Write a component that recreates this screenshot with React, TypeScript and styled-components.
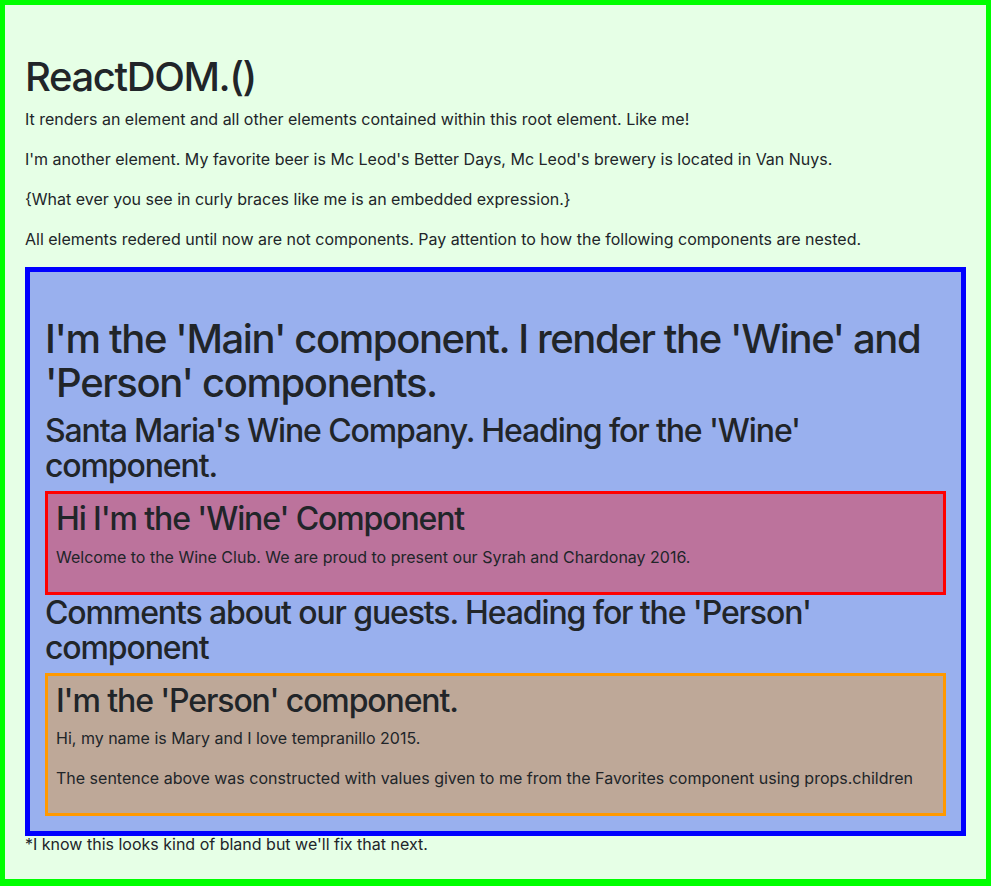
import styled, { createGlobalStyle } from "styled-components";

const GlobalStyle = createGlobalStyle`
  html, body {
    margin: 0;
    padding: 0;
  }
  body {
    font-family: Inter, "Helvetica Neue", Arial, sans-serif;
    font-size: 16px;
    line-height: 1.5;
    color: #212529;
    background: #ffffff;
  }
  * {
    box-sizing: border-box;
  }
`;

const Page = styled.div`
  height: 886px;
  border: 5px solid #00ff00;
  border-bottom-width: 7px;
  background-color: #e6ffe6;
  padding: 50px 20px 0;
`;

const Title = styled.h1`
  font-size: 40px;
  font-weight: 500;
  line-height: 1.1;
  letter-spacing: -0.035em;
  margin: 0 0 8px;
`;

const Heading = styled.h2`
  font-size: 32px;
  font-weight: 500;
  line-height: 1.1;
  letter-spacing: -0.035em;
  margin: 0 0 8px;
`;

const Text = styled.p`
  margin: 0 0 16px;
`;

interface BoxProps {
  $border: string;
  $bg: string;
}

const MainBox = styled.div<BoxProps>`
  border: 5px solid ${(p) => p.$border};
  background-color: ${(p) => p.$bg};
  padding: 45px 15px 15px;
`;

const InnerBox = styled.div<BoxProps>`
  border: 3px solid ${(p) => p.$border};
  background-color: ${(p) => p.$bg};
  padding: 7px 8px 7px;
`;

const Footnote = styled.div`
  line-height: 12px;
  padding-top: 2px;
`;

function Wine() {
  return (
    <InnerBox $border="#ff0000" $bg="#bc739c">
      <Heading>Hi I'm the 'Wine' Component</Heading>
      <Text>
        Welcome to the Wine Club. We are proud to present our Syrah and
        Chardonay 2016.
      </Text>
    </InnerBox>
  );
}

function Person({ children }: { children: React.ReactNode }) {
  return (
    <InnerBox $border="#ff9900" $bg="#bea898">
      <Heading>I'm the 'Person' component.</Heading>
      <Text>{children}</Text>
      <Text>
        The sentence above was constructed with values given to me from the
        Favorites component using props.children
      </Text>
    </InnerBox>
  );
}

function Main() {
  return (
    <MainBox $border="#0000ff" $bg="#99b0ee">
      <Title>I'm the 'Main' component. I render the 'Wine' and 'Person' components.</Title>
      <Heading>Santa Maria's Wine Company. Heading for the 'Wine' component.</Heading>
      <Wine />
      <Heading>Comments about our guests. Heading for the 'Person' component</Heading>
      <Person>Hi, my name is Mary and I love tempranillo 2015.</Person>
    </MainBox>
  );
}

export default function App() {
  return (
    <Page>
      <GlobalStyle />
      <Title>ReactDOM.()</Title>
      <Text>
        It renders an element and all other elements contained within this root
        element. Like me!
      </Text>
      <Text>
        I'm another element. My favorite beer is Mc Leod's Better Days, Mc
        Leod's brewery is located in Van Nuys.
      </Text>
      <Text>{"{What ever you see in curly braces like me is an embedded expression.}"}</Text>
      <Text>
        All elements redered until now are not components. Pay attention to how
        the following components are nested.
      </Text>
      <Main />
      <Footnote>*I know this looks kind of bland but we'll fix that next.</Footnote>
    </Page>
  );
}
